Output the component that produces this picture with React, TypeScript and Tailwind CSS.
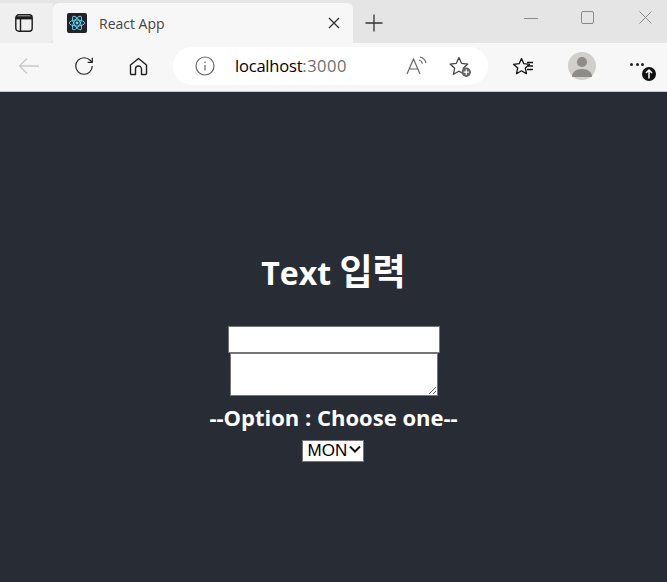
import React from "react";

const Btn = ({ children, className = "" }: { children: React.ReactNode; className?: string }) => (
  <div className={`flex items-center justify-center ${className}`}>{children}</div>
);

export default function App() {
  return (
    <div className="flex h-[582px] w-[667px] flex-col overflow-hidden bg-[#282c34] font-['Open_Sans','Noto_Sans_CJK_KR',sans-serif]">
      {/* tab strip */}
      <div className="flex h-[43px] shrink-0 items-end bg-[#e5e5e5] pt-[3px]">
        <Btn className="h-full w-[53px] rounded-br-[5px] bg-[#efefef] pr-[6px]">
          <svg width="18" height="18" viewBox="0 0 18 18" fill="none" stroke="#1c1c1c" strokeWidth="1.4">
            <rect x="0.8" y="0.8" width="16.4" height="16.4" rx="3" />
            <path d="M1 3.800h16" strokeWidth="3.200" />
            <path d="M5.500 5v12" />
          </svg>
        </Btn>
        <div className="flex h-full w-[300px] items-center rounded-t-[6px] bg-[#f7f7f7] pl-[14px] pr-[13px]">
          <div className="flex h-5 w-5 items-center justify-center rounded-[2px] bg-[#20232a]">
            <svg width="18" height="18" viewBox="0 0 20 20" fill="none" stroke="#61dafb" strokeWidth="1">
              <ellipse cx="10" cy="10" rx="8.500" ry="3.400" />
              <ellipse cx="10" cy="10" rx="8.500" ry="3.400" transform="rotate(60 10 10)" />
              <ellipse cx="10" cy="10" rx="8.500" ry="3.400" transform="rotate(120 10 10)" />
              <circle cx="10" cy="10" r="1.600" fill="#61dafb" stroke="none" />
            </svg>
          </div>
          <span className="ml-3 flex-1 text-[14px] text-[#444]">React App</span>
          <svg width="12" height="12" viewBox="0 0 12 12" stroke="#333" strokeWidth="1.3">
            <path d="M1 1l10 10M11 1L1 11" />
          </svg>
        </div>
        <Btn className="h-full w-[42px]">
          <svg width="18" height="18" viewBox="0 0 18 18" stroke="#333" strokeWidth="1.3">
            <path d="M9 0.500v17M0.500 9h17" />
          </svg>
        </Btn>
        <div className="flex h-full flex-1 items-start pl-[129px] pt-[8px]">
          <Btn className="h-[13px] w-[14px]">
            <div className="mt-[1px] h-px w-[14px] bg-[#8a8a8a]" />
          </Btn>
          <Btn className="ml-[43px] h-[13px] w-[13px]">
            <div className="h-[13px] w-[13px] rounded-[2px] border border-[#8a8a8a]" />
          </Btn>
          <Btn className="ml-[45px] h-[13px] w-[13px]">
            <svg width="13" height="13" viewBox="0 0 13 13" stroke="#8a8a8a" strokeWidth="1">
              <path d="M0.500 0.500l12 12M12.500 0.500l-12 12" />
            </svg>
          </Btn>
        </div>
      </div>
      {/* toolbar */}
      <div className="flex h-[49px] shrink-0 items-center border-b border-[#c8c8c8] bg-[#f7f7f7] pb-[2px]">
        <Btn className="ml-[18px] w-[22px]">
          <svg width="22" height="18" viewBox="0 0 22 18" fill="none" stroke="#c9c9c9" strokeWidth="1.3">
            <path d="M21 9H1.500M9 1.500L1.500 9 9 16.500" />
          </svg>
        </Btn>
        <Btn className="ml-[33px] w-[22px]">
          <svg width="24" height="24" viewBox="0 0 24 24" fill="none" stroke="#222" strokeWidth="1.300">
            <path d="M21 12a9 9 0 1 1-9-9c2.520 0 4.930 1 6.740 2.740L21 8" />
            <path d="M21 3v5h-5" />
          </svg>
        </Btn>
        <Btn className="ml-[33px] w-[20px]">
          <svg width="19" height="19" viewBox="0 0 19 19" fill="none" stroke="#222" strokeWidth="1.4" strokeLinejoin="round">
            <path d="M1.500 8L9.500 1.500 17.500 8v8.500a1 1 0 0 1-1 1H12.500V12a3 3 0 0 0-6 0v5.500H2.500a1 1 0 0 1-1-1z" />
          </svg>
        </Btn>
        <div className="ml-[25px] flex h-[38px] w-[315px] items-center rounded-[19px] bg-white pl-[22px]">
          <svg width="20" height="20" viewBox="0 0 20 20" fill="none" stroke="#666" strokeWidth="1.2">
            <circle cx="10" cy="10" r="9" />
            <path d="M10 9v5.500M10 5.500v1.500" />
          </svg>
          <span className="ml-[20px] w-[111px] text-[16.500px] tracking-[-0.2px] text-black">
            localhost<span className="tracking-[0.5px] text-[#6f6f6f]">:3000</span>
          </span>
          <span className="ml-[60px] flex">
            <svg width="22" height="20" viewBox="0 0 22 20" fill="none" stroke="#666" strokeWidth="1.2">
              <path d="M1 18L7.500 3 14 18M3.500 13h8" />
              <path d="M13 4a5 5 0 0 1 3.500 3.500M14 1a8 8 0 0 1 6 6" />
            </svg>
          </span>
          <span className="ml-[21px] mt-[2px] flex">
            <svg width="23" height="22" viewBox="0 0 22 21" fill="none" stroke="#444" strokeWidth="1.2" strokeLinejoin="round">
              <path d="M9.500 1.500l2.500 5.500 6 .7-4.400 4 1.200 5.800-5.300-3-5.300 3 1.200-5.800-4.400-4 6-.7z" />
              <circle cx="16.500" cy="15.500" r="4.500" fill="#666" stroke="none" />
              <path d="M16.500 13v5M14 15.500h5" stroke="#fff" strokeWidth="1.2" />
            </svg>
          </span>
        </div>
        <Btn className="ml-[24px] w-[22px]">
          <svg width="22" height="19" viewBox="0 0 22 19" fill="none" stroke="#111" strokeWidth="1.3" strokeLinejoin="round">
            <path d="M9.500 1.500l2.300 5.200 5.700.6-4.200 3.800 1.200 5.600-5-2.900-5 2.900 1.200-5.600L1.500 7.300l5.700-.6z" />
            <path d="M15 5.500h6M16 9h5M15 12.500h6" />
          </svg>
        </Btn>
        <Btn className="ml-[34px] h-[28px] w-[28px] rounded-full bg-[#d1cfcc]">
          <svg width="22" height="24" viewBox="0 0 22 24" fill="#8e8b88">
            <circle cx="11" cy="8" r="5" />
            <path d="M1 23c0-5 4-8 10-8s10 3 10 8z" />
          </svg>
        </Btn>
        <div className="relative ml-[34px] h-6 w-8">
          <div className="absolute left-0 top-[9px] flex gap-[2.500px]">
            <div className="h-[3px] w-[3px] rounded-full bg-[#222]" />
            <div className="h-[3px] w-[3px] rounded-full bg-[#222]" />
            <div className="h-[3px] w-[3px] rounded-full bg-[#222]" />
          </div>
          <div className="absolute left-[12px] top-[13px] flex h-[14px] w-[14px] items-center justify-center rounded-full bg-[#111]">
            <svg width="10" height="10" viewBox="0 0 10 10" fill="none" stroke="#fff" strokeWidth="1.5">
              <path d="M5 9.500V1M2 4l3-3 3 3" />
            </svg>
          </div>
        </div>
      </div>
      {/* page */}
      <div className="flex flex-1 flex-col items-center pt-[158px] text-white">
        <h2 className="text-[32px] font-bold leading-[44px]">
          Text <span className="text-[36px] leading-[44px]">입력</span>
        </h2>
        <input className="mt-[31px] box-border h-[27px] w-[212px] border border-[#767676] bg-white outline-none" />
        <textarea className="block h-[43px] w-[208px] border border-[#767676] bg-white outline-none" />
        <div className="mt-[8px] text-[22px] font-bold leading-[26px]">--Option : Choose one--</div>
        <div className="relative -ml-[2px] mt-[8px] h-[22px] w-[62px]">
          <select className="h-[22px] w-[62px] appearance-none border border-[#767676] bg-white pl-[5px] text-[17px] leading-[20px] text-black font-['Liberation_Sans',sans-serif]">
            <option>MON</option>
          </select>
          <svg className="pointer-events-none absolute left-[47px] top-[7px]" width="12" height="8" viewBox="0 0 12 8" fill="none" stroke="#111" strokeWidth="2">
            <path d="M1 1.500l5 5 5-5" />
          </svg>
        </div>
      </div>
    </div>
  );
}
